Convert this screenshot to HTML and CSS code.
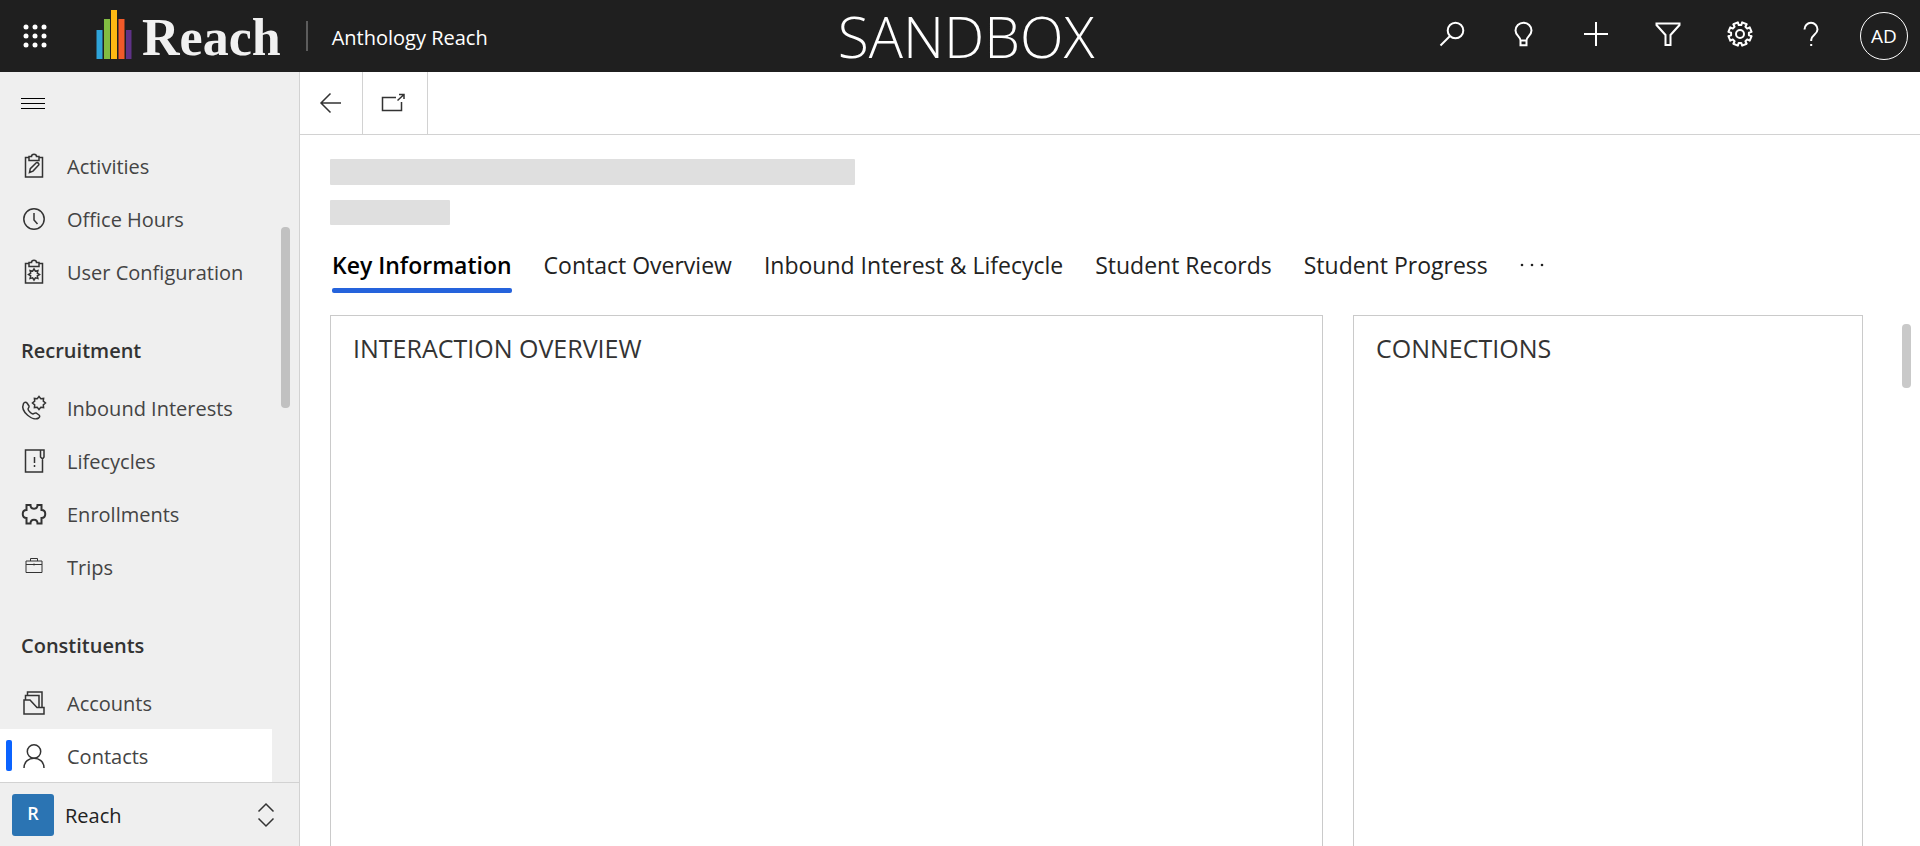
FILE: index.html
```html
<!DOCTYPE html>
<html lang="en">
<head>
<meta charset="utf-8">
<title>Anthology Reach</title>
<link rel="stylesheet" href="styles.css">
</head>
<body>
<div class="app">
  <header class="topbar">
    <div class="topbar-left">
      <button class="waffle" aria-label="App launcher">
        <svg width="24" height="24" viewBox="0 0 24 24" fill="#fff"><circle cx="3" cy="3" r="2.5"/><circle cx="12" cy="3" r="2.5"/><circle cx="21" cy="3" r="2.5"/><circle cx="3" cy="12" r="2.5"/><circle cx="12" cy="12" r="2.5"/><circle cx="21" cy="12" r="2.5"/><circle cx="3" cy="21" r="2.5"/><circle cx="12" cy="21" r="2.5"/><circle cx="21" cy="21" r="2.5"/></svg>
      </button>
      <a class="logo" href="#">
        <svg width="36" height="50" viewBox="0 0 36 50"><path fill="#2ea3d8" d="M0.500 19h6v29h-6z"/><path fill="#82bc41" d="M8 8h6v40H8z"/><path fill="#fdb913" d="M15 -1h6v49h-6z"/><path fill="#f15a29" d="M22.500 8h6v40h-6z"/><path fill="#5f3287" d="M30 19h5.500v29H30z"/></svg>
        <span class="logo-word">Reach</span>
      </a>
      <span class="divider"></span>
      <span class="app-name">Anthology Reach</span>
    </div>
    <div class="env">SANDBOX</div>
    <div class="topbar-right">
      <button class="tool" aria-label="Search"><svg width="26" height="26" viewBox="0 0 26 26"><circle cx="16.500" cy="9.500" r="7.800"/><path d="M11 15L1.500 24.500"/></svg></button>
      <button class="tool" aria-label="Tips"><svg width="26" height="26" viewBox="0 0 26 26"><path d="M9.500 19.500C9.500 15.500 4.500 14.500 4.500 9.500a8 7.800 0 0 1 16 0c0 5-5 6-5 10zM9.500 19.500v4.800h6v-4.800"/></svg></button>
      <button class="tool" aria-label="New"><svg width="26" height="26" viewBox="0 0 26 26"><path d="M13 1v24M1 13h24"/></svg></button>
      <button class="tool" aria-label="Filter"><svg width="26" height="26" viewBox="0 0 26 26"><path d="M1.500 2.500h23v1.500L15.500 14v10h-5V14L1.500 4z"/></svg></button>
      <button class="tool" aria-label="Settings"><svg width="26" height="26" viewBox="-13 -13 26 26" stroke-linejoin="round"><circle r="4"/><path d="M8.910 1.250L11.600 2.150 9.720 6.680 7.190 5.420 5.420 7.190 6.680 9.720 2.150 11.600 1.250 8.910-1.250 8.910-2.150 11.600-6.680 9.720-5.420 7.190-7.190 5.420-9.720 6.680-11.600 2.150-8.910 1.250-8.910-1.250-11.600-2.150-9.720-6.680-7.190-5.420-5.420-7.190-6.680-9.720-2.150-11.600-1.250-8.910 1.250-8.910 2.150-11.600 6.680-9.720 5.420-7.190 7.190-5.420 9.720-6.680 11.600-2.150 8.910-1.250z"/></svg></button>
      <button class="tool" aria-label="Help"><svg width="26" height="26" viewBox="0 0 26 26"><path d="M5.500 8.500a6.500 6.700 0 0 1 13 0c0 5-6.300 5.500-6.300 10.500v1M12.200 23v2"/></svg></button>
      <button class="avatar">AD</button>
    </div>
  </header>
  <div class="body">
    <aside class="sidebar">
      <button class="menu" aria-label="Site map"><svg width="24" height="12" viewBox="0 0 24 12"><path d="M0 .5h24M0 5.500h24M0 10.500h24"/></svg></button>
      <nav class="nav">
        <a class="item" href="#"><svg class="ico" viewBox="0 0 24 24"><path d="M7 3.500H3.500v19.500h17V3.500H17M7 2.500v4h10v-4h-2.500c0-3-5-3-5 0zM7.500 18.500l.8-3.800 6-6c1-1 3.400 1.400 2.400 2.400l-5.700 6z"/></svg>Activities</a>
        <a class="item" href="#"><svg class="ico" viewBox="0 0 24 24"><circle cx="12" cy="12" r="10.200"/><path d="M12 6v7l3.500 4"/></svg>Office Hours</a>
        <a class="item" href="#"><svg class="ico" viewBox="0 0 24 24"><path d="M7 3.500H3.500v19.500h17V3.500H17M7 2.500v4h10v-4h-2.500c0-3-5-3-5 0zM17.500 14.500l-2.200 1.400.6 2.500-2.500-.6-1.400 2.200-1.400-2.200-2.500.6.6-2.500-2.200-1.400 2.200-1.400-.6-2.500 2.500.6L12 9l1.400 2.200 2.500-.6-.6 2.500z"/></svg>User Configuration</a>
        <h2 class="group">Recruitment</h2>
        <a class="item" href="#"><svg class="ico" viewBox="0 0 24 24"><path d="M1.500 7.500c1-1.800 2.800-1.500 3.500-.5L7 10c.6 1.200-1 2-1 3 .3 2 3 4.500 5 5 1 0 1.800-1.500 3-1l3 2c1 .8 1 2-.3 3C11 25.500-2 16 1.500 7.500zM23.500 7L21.300 8.800 21.600 11.600 18.800 11.300 17 13.500 15.200 11.300 12.400 11.600 12.700 8.800 10.500 7 12.700 5.200 12.400 2.400 15.200 2.700 17 .5 18.800 2.700 21.600 2.400 21.300 5.200z"/></svg>Inbound Interests</a>
        <a class="item" href="#"><svg class="ico" viewBox="0 0 24 24"><path d="M18.500 1H3.500v22h17V9.500M18.500 1H22v7l-1.500 2L18.500 8zM12.500 8v6M12.500 16v2"/></svg>Lifecycles</a>
        <a class="item" href="#"><svg class="ico bold" viewBox="0 0 24 24"><path d="M4.500 3h4c0 5 7 5 7 0h4v5c5 0 5 8 0 8v5.500h-4c0-5-7-5-7 0h-4V16c-5 0-5-8 0-8z"/></svg>Enrollments</a>
        <a class="item" href="#"><svg class="ico thin" viewBox="0 0 24 24"><path d="M4 6h16v11.500H4zM8.500 6V3.500h7V6M4 9.500h16M12 8.500v2"/></svg>Trips</a>
        <h2 class="group">Constituents</h2>
        <a class="item" href="#"><svg class="ico" viewBox="0 0 24 24"><path d="M2 9h6l7 7.500h7V23H2zM3.500 9V4.500H17v12M5.500 4.500V1H20v15.500"/></svg>Accounts</a>
        <a class="item active" href="#"><svg class="ico" viewBox="0 0 24 24"><circle cx="12" cy="7.500" r="6.700"/><path d="M2 24c0-13 20-13 20 0"/></svg>Contacts</a>
      </nav>
      <span class="thumb side-thumb"></span>
      <button class="area">
        <span class="area-badge">R</span>
        <span class="area-name">Reach</span>
        <svg width="16" height="24" viewBox="0 0 16 24"><path d="M.5 8.500L8 1l7.500 7.500M.5 15.500L8 23l7.500-7.500"/></svg>
      </button>
    </aside>
    <main class="main">
      <div class="commands">
        <button class="cmd back" aria-label="Back"><svg width="22" height="20" viewBox="0 0 22 20"><path d="M10.500 .5L1 10l9.500 9.500M1 10h20"/></svg></button>
        <button class="cmd" aria-label="Open in new window"><svg width="24" height="20" viewBox="0 0 24 20"><path d="M15 4.500H1.500v13h19V9M16.500 7.500L23 1.500M18 1.500h5V6"/></svg></button>
      </div>
      <div class="content">
        <div class="skeleton title-skeleton"></div>
        <div class="skeleton sub-skeleton"></div>
        <div class="tabs" role="tablist">
          <button class="tab selected" role="tab">Key Information</button>
          <button class="tab" role="tab">Contact Overview</button>
          <button class="tab" role="tab">Inbound Interest &amp; Lifecycle</button>
          <button class="tab" role="tab">Student Records</button>
          <button class="tab" role="tab">Student Progress</button>
          <button class="tab" aria-label="More tabs"><svg width="24" height="4" viewBox="0 0 24 4" fill="#222"><circle cx="2" cy="2" r="1.300"/><circle cx="12" cy="2" r="1.300"/><circle cx="22" cy="2" r="1.300"/></svg></button>
        </div>
        <div class="panels">
          <section class="panel"><h3>INTERACTION OVERVIEW</h3></section>
          <section class="panel"><h3>CONNECTIONS</h3></section>
        </div>
      </div>
      <span class="thumb main-thumb"></span>
    </main>
  </div>
</div>
</body>
</html>
```
FILE: styles.css
```css
* { box-sizing: border-box; }
body {
  margin: 0;
  font-family: "Open Sans", "Noto Sans", sans-serif;
  color: #222;
  background: #fff;
}
button {
  margin: 0;
  padding: 0;
  border: 0;
  background: none;
  font: inherit;
  color: inherit;
}
a { color: inherit; text-decoration: none; }
svg { display: block; flex: none; overflow: visible; }
h2, h3 { margin: 0; }

.app {
  display: flex;
  flex-direction: column;
  height: 100vh;
  overflow: hidden;
}

.topbar {
  display: grid;
  grid-template-columns: 1fr auto 1fr;
  align-items: center;
  flex: none;
  height: 72px;
  background: #1f1f1f;
  color: #fff;
}
.topbar-left { display: flex; align-items: center; }
.waffle { padding-left: 23px; }
.logo { display: flex; align-items: flex-end; gap: 10px; height: 50px; margin-left: 49px; }
.logo-word {
  font-family: "Liberation Serif", serif;
  font-weight: 700;
  font-size: 52px;
  line-height: 46px;
  color: #f0f0f0;
}
.divider { width: 2px; height: 30px; margin-left: 25px; background: #5c5c5c; }
.app-name { margin-left: 24px; padding-top: 2px; font-size: 20px; }
.env { padding-left: 12px; font-size: 57px; font-weight: 300; line-height: 72px; }
.topbar-right { display: flex; justify-content: flex-end; align-items: center; padding-right: 12px; }
.tool { display: grid; place-items: center; width: 72px; height: 68px; padding-bottom: 4px; }
.tool svg { fill: none; stroke: #fff; stroke-width: 2; }
.avatar { width: 48px; height: 48px; margin-left: 12px; border: 1px solid #fff; border-radius: 50%; font-size: 19px; }

.body { display: flex; flex: 1; min-height: 0; }

.sidebar {
  position: relative;
  display: flex;
  flex-direction: column;
  flex: none;
  width: 300px;
  border-right: 1px solid #d2d2d2;
  background: #efefef;
}
.menu { display: flex; align-items: center; flex: none; height: 64px; padding-left: 21px; }
.menu svg { stroke: #000; stroke-width: 1; shape-rendering: crispEdges; }
.nav { flex: 1; min-height: 0; padding-top: 3px; overflow: hidden; }
.item {
  display: flex;
  align-items: center;
  gap: 21px;
  width: 272px;
  height: 53px;
  padding: 1px 0 0 22px;
  font-size: 20px;
  color: #444;
}
.ico { width: 24px; height: 24px; fill: none; stroke: #333; stroke-width: 1.500; }
.ico.bold { stroke-width: 2; }
.ico.thin { stroke-width: 1; }
.item.active { position: relative; background: #fff; }
.item.active::before {
  content: "";
  position: absolute;
  left: 6px;
  top: 11px;
  width: 6px;
  height: 31px;
  border-radius: 2px;
  background: #0b63ff;
}
.group {
  height: 83px;
  padding-left: 21px;
  font-size: 20px;
  font-weight: 600;
  line-height: 106px;
  color: #333;
}
.thumb { position: absolute; border-radius: 4px; background: #c1c1c1; }
.side-thumb { right: 9px; top: 155px; width: 9px; height: 181px; }
.area {
  display: flex;
  align-items: center;
  flex: none;
  height: 64px;
  padding: 0 25px 0 12px;
  border-top: 1px solid #d2d2d2;
  text-align: left;
}
.area svg { fill: none; stroke: #333; stroke-width: 1.500; }
.area-badge {
  width: 42px;
  height: 42px;
  border-radius: 3px;
  background: #2b74b3;
  color: #fff;
  font-size: 18px;
  font-weight: 600;
  line-height: 38px;
  text-align: center;
}
.area-name { flex: 1; padding: 2px 0 0 11px; font-size: 20px; font-weight: 500; }

.main { position: relative; display: flex; flex-direction: column; flex: 1; min-width: 0; }
.commands { display: flex; flex: none; height: 63px; border-bottom: 1px solid #d2d2d2; }
.cmd { display: grid; place-items: center; width: 65px; padding-right: 4px; border-right: 1px solid #d2d2d2; }
.cmd.back { width: 63px; padding-right: 0; }
.cmd svg { fill: none; stroke: #333; stroke-width: 1.500; }
.content { display: flex; flex-direction: column; flex: 1; min-height: 0; padding: 24px 57px 0 30px; }
.skeleton { flex: none; background: #dfdfdf; border-radius: 1px; }
.title-skeleton { width: 525px; height: 26px; margin-bottom: 15px; }
.sub-skeleton { width: 120px; height: 25px; }
.tabs { display: flex; gap: 32px; height: 69px; margin: 0 2px 21px; }
.tab { position: relative; padding-top: 11px; font-size: 23px; white-space: nowrap; }
.tab.selected { font-weight: 600; color: #000; }
.tab.selected::after {
  content: "";
  position: absolute;
  left: 0;
  right: 0;
  bottom: 1px;
  height: 5px;
  border-radius: 2px;
  background: #2563dc;
}
.panels { display: grid; grid-template-columns: 993fr 510fr; gap: 30px; flex: 1; }
.panel { padding: 14px 22px; border: 1px solid #cacaca; border-bottom: 0; }
.panel h3 { font-size: 25px; font-weight: 400; line-height: 36px; color: #333; }
.main-thumb { right: 9px; top: 252px; width: 9px; height: 64px; background: #c9c9c9; }
```
